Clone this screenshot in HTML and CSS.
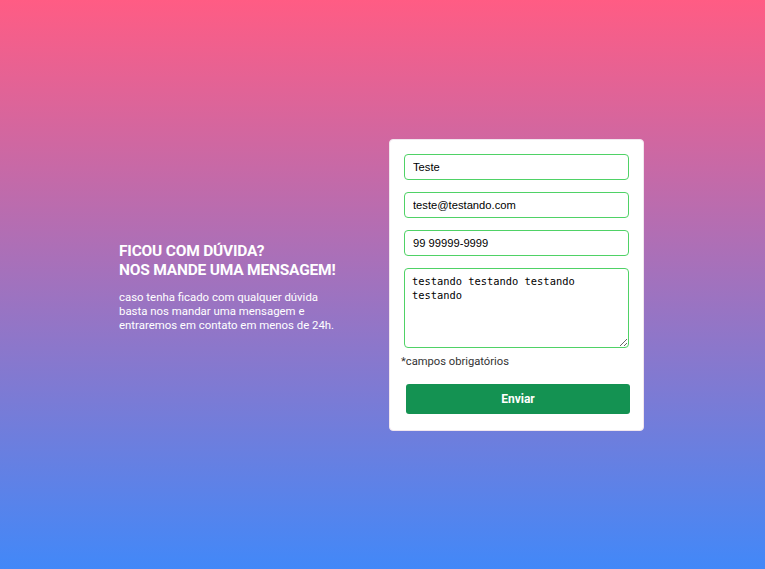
FILE: index.html
```html
<!DOCTYPE html>
<html lang="pt-BR">
<head>
<meta charset="utf-8">
<title>Contato</title>
<link rel="stylesheet" href="styles.css">
</head>
<body>
<main class="page">
  <section class="intro">
    <h1 class="intro-title">FICOU COM DÚVIDA?<br>NOS MANDE UMA MENSAGEM!</h1>
    <p class="intro-text">caso tenha ficado com qualquer dúvida basta nos mandar uma mensagem e entraremos em contato em menos de 24h.</p>
  </section>
  <form class="card">
    <input class="field" type="text" value="Teste">
    <input class="field" type="email" value="teste@testando.com">
    <input class="field" type="text" value="99 99999-9999">
    <textarea class="field area">testando testando testando testando</textarea>
    <p class="note">*campos obrigatórios</p>
    <button class="send" type="button">Enviar</button>
  </form>
</main>
</body>
</html>
```
FILE: styles.css
```css
html, body {
  margin: 0;
  padding: 0;
  height: 100%;
}
body {
  background: linear-gradient(to bottom, #ff5c84 0%, #4288f8 100%);
  font-family: Roboto, "Liberation Sans", sans-serif;
}
.page {
  height: 569px;
  display: flex;
  align-items: center;
  justify-content: center;
  gap: 40px;
  padding: 1px 2px 0 0;
  box-sizing: border-box;
}
.intro {
  width: 230px;
  color: #fff;
  margin-top: 3px;
}
.intro-title {
  margin: 0;
  font-size: 15.5px;
  font-weight: 700;
  line-height: 19px;
  letter-spacing: -0.2px;
}
.intro-text {
  margin: 10px 0 0;
  font-size: 11.4px;
  line-height: 14px;
}
.card {
  width: 225px;
  padding: 14px 14px 16px;
  background: #fff;
  border: 1px solid #f1e6ee;
  border-radius: 4px;
  display: flex;
  flex-direction: column;
}
.field {
  box-sizing: border-box;
  width: 225px;
  height: 26px;
  margin: 0 0 12px;
  padding: 0 8px;
  border: 1px solid #4fd266;
  border-radius: 4px;
  font-family: "Liberation Sans", Arial, sans-serif;
  font-size: 11.2px;
  color: #000;
  background: #fff;
  outline: none;
}
.area {
  height: 80px;
  margin-bottom: 7px;
  padding: 5px 7px;
  font-family: "DejaVu Sans Mono", monospace;
  font-size: 10.4px;
  line-height: 14px;
  resize: vertical;
}
.note {
  margin: 0 0 0 -3px;
  font-size: 11.2px;
  line-height: 14px;
  color: #333;
}
.send {
  width: 224px;
  height: 30px;
  margin: 15px 0 0 2px;
  border: none;
  border-radius: 3px;
  background: #149252;
  color: #fff;
  font-family: Roboto, "Liberation Sans", sans-serif;
  font-size: 12px;
  font-weight: 700;
}
```
